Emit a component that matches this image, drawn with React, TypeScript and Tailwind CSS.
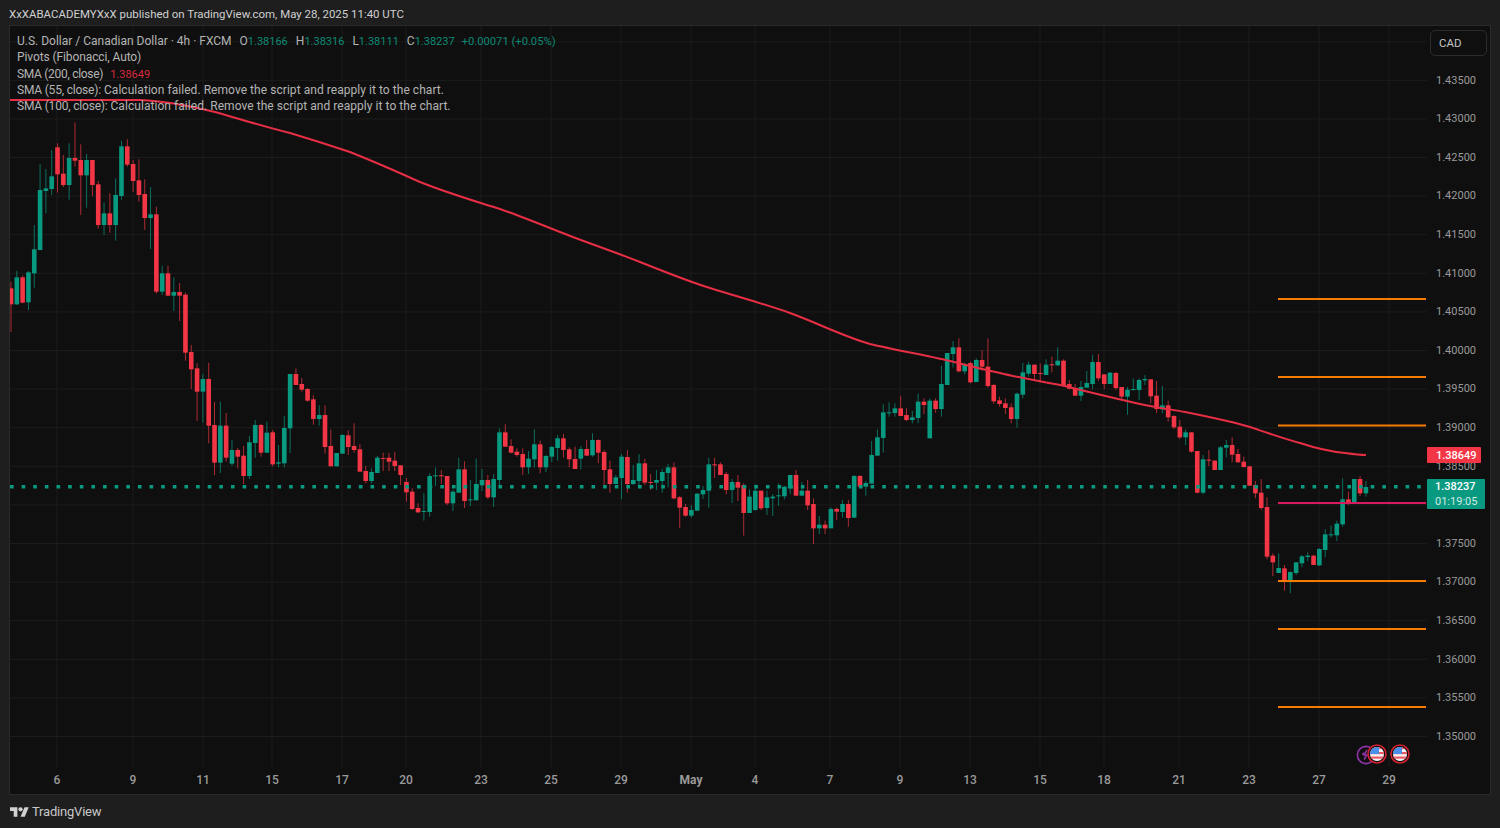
import React from "react";

type Row = [number, number, number, number, number];
const seg = (base: number, rows: Row[]) =>
  rows.map(([g, t, b, h, l]) => ({
    g,
    t: base + t / 3,
    b: base + b / 3,
    h: base + h / 3,
    l: base + l / 3,
  }));

const candles = [
  ...seg(110, [
    [0,535,583,515,666],[1,502,583,482,585],[0,502,578,496,580],[1,487,577,483,600],[1,418,490,345,533],
    [1,240,420,162,420],[1,235,243,177,310],[1,199,237,120,255],[0,112,193,100,248],[0,191,225,135,231],
    [1,144,225,100,269],[0,144,152,37,170],[0,150,196,103,315],[1,150,196,132,293],[0,150,225,150,258],
    [0,223,345,213,356],[1,310,345,278,375],[0,310,345,250,368],[1,255,345,205,392],[1,109,258,92,269],
    [0,109,164,88,170],[0,162,213,150,246],[0,211,255,148,275],[0,252,324,208,360],[1,313,324,231,417],
    [0,313,545,290,551],[1,490,545,467,555],[0,490,557,467,557],[1,546,557,502,603],[0,546,557,519,633],
    [0,554,728,548,752],
  ]),
  ...seg(300, [
    [0,156,208,135,267],[0,205,275,190,363],[1,237,275,222,368],[0,237,377,188,430],[0,375,488,306,525],
    [1,377,488,306,519],[0,377,473,339,485],[1,450,491,420,497],[0,450,470,444,505],[0,467,528,438,552],
    [1,427,528,408,537],[1,375,429,360,473],[0,375,458,372,470],[1,398,458,365,458],[0,397,493,390,499],
    [1,487,491,435,502],[1,384,490,348,502],[1,222,385,222,459],[0,222,255,205,255],[0,252,269,234,275],
    [0,267,302,265,305],[0,298,357,286,374],[1,345,357,316,377],[0,345,441,316,461],[0,438,499,388,499],
    [1,459,499,459,499],[1,405,461,402,461],[0,406,441,391,465],
  ]),
  ...seg(400, [
    [0,138,150,70,158],[0,148,215,132,215],[0,213,243,198,250],[1,216,243,205,250],[1,173,219,168,219],
    [0,174,176,158,213],[0,173,185,158,213],[0,182,198,155,213],[0,196,225,196,255],[0,246,277,234,305],
    [0,275,327,265,330],[0,324,337,310,339],[1,333,335,280,362],[1,228,336,220,350],[1,226,228,202,258],
    [0,226,228,210,252],[0,228,310,228,315],[1,275,310,270,333],[1,208,278,173,278],[0,208,303,184,324],
    [1,298,300,240,318],[1,252,301,175,301],[1,240,256,207,273],[0,240,292,225,297],[1,237,292,222,321],
    [1,97,240,85,258],[0,97,140,73,140],[0,138,158,118,160],[0,155,165,145,170],[0,162,202,145,225],
    [1,176,202,153,222],[1,133,178,88,203],[0,133,202,122,220],[1,168,202,165,216],[1,141,170,138,186],
    [1,115,144,105,182],[0,115,150,102,173],[0,148,178,142,202],[0,177,207,140,207],[1,147,176,138,208],
    [0,147,167,120,167],[1,120,166,100,170],[0,120,158,118,190],[0,156,210,150,256],[0,208,252,182,278],
    [1,232,252,225,252],[1,170,234,162,298],[0,171,252,150,278],[1,240,252,195,255],[1,190,243,162,256],
    [0,190,248,176,255],[0,246,248,222,270],[1,240,248,210,270],[1,216,243,206,278],[1,202,219,192,262],
    [0,202,295,187,298],[0,292,323,288,384],[0,321,347,312,350],[1,330,347,316,353],[1,281,332,279,332],
    [1,270,283,258,297],[1,193,272,173,323],[0,193,195,173,234],[0,193,225,187,225],[0,222,270,216,283],
    [1,246,270,237,309],[0,246,263,225,303],[0,255,339,250,407],[1,290,339,268,339],[1,272,330,253,332],
    [0,272,325,272,330],[1,292,324,272,345],[1,290,295,282,348],[1,286,288,250,318],[1,260,289,258,298],
    [1,225,265,225,282],[0,225,287,210,287],[1,272,287,246,287],[0,272,316,240,330],[0,312,385,295,432],
    [1,374,385,348,402],[0,374,385,362,402],[1,327,385,322,385],[0,327,335,322,360],[1,312,336,300,353],
    [0,312,354,300,380],[1,228,353,225,353],[0,228,260,225,265],[1,249,260,243,287],[1,165,251,123,251],
    [1,112,167,88,167],[1,37,114,13,158],[1,37,39,7,50],[1,25,39,10,50],
  ]),
  ...seg(330, [
    [0,235,258,197,258],[0,255,270,235,273],[1,262,270,243,280],[1,215,264,191,280],[0,215,225,205,252],
    [1,212,325,205,325],[0,212,237,205,248],[1,162,237,107,260],[1,69,165,69,165],[1,52,72,33,112],
    [0,52,124,25,127],[1,104,124,98,133],[0,99,157,95,160],[1,90,156,85,156],[0,90,110,60,122],
    [0,110,168,25,173],[0,165,214,162,222],[0,211,222,200,230],[0,220,234,205,252],[0,232,267,220,280],
    [1,191,267,188,293],[1,127,194,98,205],[1,104,131,95,140],[0,104,132,104,152],[0,129,131,100,158],
    [1,104,135,88,135],[0,103,105,80,127],[1,92,106,52,108],[0,92,167,88,167],[0,162,176,150,178],
    [0,175,197,162,197],[1,171,197,153,213],[1,159,173,123,173],[1,96,162,75,178],[0,96,145,72,153],
    [0,133,162,133,177],[1,128,162,126,162],[0,129,174,126,180],[0,171,200,171,207],[1,179,200,171,254],
    [1,177,179,145,182],[1,150,180,145,210],[1,147,151,135,165],[0,148,199,148,220],[0,197,237,153,249],
    [1,226,238,168,250],[0,226,262,212,275],[0,258,292,255,297],[0,290,322,270,327],[1,307,322,298,345],
    [0,307,365,307,368],[0,363,488,363,490],[1,388,488,375,493],
  ]),
  ...seg(430, [
    [0,89,91,60,108],[0,92,120,90,120],[1,52,120,48,120],[1,45,53,30,82],[0,45,74,22,97],
    [0,72,97,57,97],[0,95,111,80,113],[0,109,167,109,167],[0,165,190,153,205],[0,188,234,147,240],
    [0,231,380,202,388],[0,377,397,370,438],[1,414,429,370,429],[0,415,450,405,482],[1,426,450,424,490],
    [1,397,429,397,435],[1,379,400,375,412],[1,377,381,367,393],[0,377,405,375,405],[1,357,406,355,408],
    [1,313,360,298,382],[1,313,316,287,323],[1,281,316,272,333],[1,208,283,145,290],[0,208,218,185,225],
    [1,147,216,147,216],[0,147,190,138,198],[1,171,190,153,200],
  ]),
];

const RED = "#f23645";
const GREEN = "#089981";

const vGrid = [57, 133, 203, 272, 342, 406, 481, 551, 621, 691, 755, 830, 900, 970, 1040, 1104, 1179, 1249, 1319, 1389];
const hGrid = Array.from({ length: 19 }, (_, i) => 41.7 + 38.6 * i);

const prices = [
  "1.43500", "1.43000", "1.42500", "1.42000", "1.41500", "1.41000", "1.40500", "1.40000", "1.39500",
  "1.39000", "1.38500", "", "1.37500", "1.37000", "1.36500", "1.36000", "1.35500", "1.35000",
];

const dates: [string, number][] = [
  ["6", 57], ["9", 133], ["11", 203], ["15", 272], ["17", 342], ["20", 406], ["23", 481], ["25", 551], ["29", 621],
  ["May", 691], ["4", 755], ["7", 830], ["9", 900], ["13", 970], ["15", 1040], ["18", 1104], ["21", 1179], ["23", 1249],
  ["27", 1319], ["29", 1389],
];

const sma =
  "M10 100 C60 100 100 100 140 100 C165 101 190 106 215 112 C240 119 265 127 290 133 C310 139 335 147 350 152 C375 162 400 173 420 182 C450 194 475 201 500 209 C520 216 540 224 560 232 C585 242 615 252 640 262 C665 272 690 282 710 288 C735 296 765 304 790 313 C815 322 845 337 870 344 C895 350 925 355 950 361 C970 366 985 370 1000 373 C1020 378 1040 381 1060 385 C1090 392 1120 400 1150 406 C1165 409 1175 410 1185 412 C1205 416 1230 421 1250 427 C1265 432 1285 439 1300 443 C1318 449 1335 452 1345 453 C1352 454 1360 455 1366 455";

function Flag({ cx }: { cx: number }) {
  return (
    <g>
      <circle cx={cx} cy={754} r={9} fill="#0f0f0f" stroke="#d32232" strokeWidth={1.6} />
      <clipPath id={`f${cx}`}>
        <circle cx={cx} cy={754} r={7} />
      </clipPath>
      <g clipPath={`url(#f${cx})`}>
        <rect x={cx - 7} y={747} width={14} height={14} fill="#f5f5f5" />
        <rect x={cx - 7} y={752} width={14} height={2.2} fill="#ee5a63" />
        <rect x={cx - 7} y={756.5} width={14} height={2.2} fill="#ee5a63" />
        <rect x={cx - 7} y={747} width={14} height={2.2} fill="#ee5a63" />
        <rect x={cx - 7} y={747} width={9} height={7} fill="#4a90ea" />
      </g>
    </g>
  );
}

function ChartSvg() {
  return (
    <svg className="block w-[1417px] h-[741px]" viewBox="10 26 1417 741">
      {hGrid.map((y) => (
        <line key={y} x1={10} x2={1427} y1={y} y2={y} stroke="#1c1c1c" strokeWidth={1} />
      ))}
      {vGrid.map((x) => (
        <line key={x} x1={x} x2={x} y1={26} y2={767} stroke="#1c1c1c" strokeWidth={1} />
      ))}
      {candles.map((c, i) => {
        const x = 11 + 5.815 * i;
        const col = c.g ? GREEN : RED;
        return (
          <g key={i}>
            <line x1={x} x2={x} y1={c.h} y2={c.l} stroke={col} strokeWidth={1} strokeOpacity={0.7} />
            <rect x={x - 2.3} y={c.t} width={4.6} height={Math.max(c.b - c.t, 1)} fill={col} />
          </g>
        );
      })}
      {[299, 377, 425.5, 581, 629, 707].map((y) => (
        <line key={y} x1={1278} x2={1426} y1={y} y2={y} stroke="#f57c00" strokeWidth={2} />
      ))}
      <line x1={1278} x2={1426} y1={503} y2={503} stroke="#d81b60" strokeWidth={2} />
      <path d={sma} fill="none" stroke="#e62e44" strokeWidth={2} />
      <line x1={10} x2={1427} y1={486.7} y2={486.7} stroke={GREEN} strokeWidth={3.5} strokeDasharray="3.6 8.03" />
      <circle cx={1366} cy={755} r={8.6} fill="#0f0f0f" stroke="#8e33a8" strokeWidth={1.6} />
      <path d="M1367 750 l-3 5 h3 l-3 4.5 M1362 754 l3 -1" fill="none" stroke="#8e33a8" strokeWidth={1.5} />
      <Flag cx={1377} />
      <Flag cx={1400} />
    </svg>
  );
}

function LegendRow({ children }: { children: React.ReactNode }) {
  return <div className="h-[16.3px] leading-[16.3px] whitespace-nowrap">{children}</div>;
}

function Ohlc({ k, v }: { k: string; v: string }) {
  return (
    <>
      <span className="ml-[8px]">{k}</span>
      <span className="text-[11px] text-[#0b8a75]">{v}</span>
    </>
  );
}

export default function App() {
  const font = { fontFamily: '"Roboto", "Liberation Sans", sans-serif' };
  return (
    <div className="w-[1500px] h-[828px] flex flex-col bg-[#1e1e1e] overflow-hidden" style={font}>
      <div className="h-[25px] shrink-0 pt-[6px] pl-[9px] text-[11.45px] leading-[16px] text-[#d0d0d0] whitespace-nowrap">
        XxXABACADEMYXxX published on TradingView.com, May 28, 2025 11:40 UTC
      </div>
      <div className="ml-[9px] w-[1482px] h-[770px] shrink-0 border border-[#2a2a2a] bg-[#0f0f0f] flex flex-col">
        <div className="flex h-[741px] shrink-0">
          <div className="relative w-[1417px] shrink-0">
            <ChartSvg />
            <div className="absolute left-[7px] top-[7px] text-[12px] text-[#b4b4b4]">
              <LegendRow>
                <span>U.S. Dollar / Canadian Dollar · 4h · FXCM</span>
                <Ohlc k="O" v="1.38166" />
                <Ohlc k="H" v="1.38316" />
                <Ohlc k="L" v="1.38111" />
                <Ohlc k="C" v="1.38237" />
                <span className="ml-[7px] text-[11.2px] text-[#0b8a75]">+0.00071 (+0.05%)</span>
              </LegendRow>
              <LegendRow>
                <span className="tracking-[-0.1px]">Pivots (Fibonacci, Auto)</span>
              </LegendRow>
              <LegendRow>
                <span className="tracking-[-0.3px]">SMA (200, close)</span>
                <span className="ml-[7px] text-[11px] text-[#d62b3d]">1.38649</span>
              </LegendRow>
              <LegendRow>
                <span className="tracking-[-0.2px]">SMA (55, close):</span>
                <span className="tracking-[0.05px]"> Calculation failed. Remove the script and reapply it to the chart.</span>
              </LegendRow>
              <LegendRow>
                <span className="tracking-[-0.2px]">SMA (100, close):</span>
                <span className="tracking-[0.05px]"> Calculation failed. Remove the script and reapply it to the chart.</span>
              </LegendRow>
            </div>
          </div>
          <div className="relative w-[63px] shrink-0 pt-[35.7px] text-[11px] text-[#9a9a9a]">
            <div className="flex flex-col">
              {prices.map((p, i) => (
                <div key={i} className="h-[38.6px] leading-[38.6px] pl-[9px]">
                  {p}
                </div>
              ))}
            </div>
            <div className="absolute left-[3px] top-[4px] w-[57px] h-[26px] rounded-[5px] border border-[#2c2c2c] bg-[#0f0f0f] pl-[8px] leading-[24px] text-[11.5px] text-[#c4c4c4]">
              CAD
            </div>
            <div className="absolute left-0 top-[421px] w-[54px] h-[16px] rounded-[1px] bg-[#f23645] pl-[9px] text-[11px] leading-[17px] font-medium text-white">
              1.38649
            </div>
            <div className="absolute left-0 top-[453px] w-[58px] h-[30px] rounded-[1px] bg-[#089981] pl-[8px] pt-[1px] text-[11px] leading-[14.5px] text-white">
              <div className="font-medium">1.38237</div>
              <div className="text-[#cfe9e3]">01:19:05</div>
            </div>
          </div>
        </div>
        <div className="flex h-[27px] shrink-0 relative text-[12px] leading-[26px] text-[#9a9a9a]">
          {dates.map(([d, x], i) => {
            const prev = i === 0 ? 10 : dates[i - 1][1];
            return (
              <div key={i} className="flex justify-end shrink-0" style={{ width: x - prev }}>
                <span className={`translate-x-1/2 ${d === "May" ? "font-bold" : "font-medium"}`}>{d}</span>
              </div>
            );
          })}
        </div>
      </div>
      <div className="flex items-center gap-[3px] pl-[10px] pt-[1px] flex-1 text-[#c8c8c8]">
        <svg className="w-[19px] h-[15px]" viewBox="0 0 36 28" fill="#d0d0d0">
          <path d="M14 22H7V11H0V4h14v18zM28 22h-8l7.5-18h8L28 22z" />
          <circle cx="20" cy="8" r="4" />
        </svg>
        <span className="text-[13px] tracking-[-0.2px]">TradingView</span>
      </div>
    </div>
  );
}
